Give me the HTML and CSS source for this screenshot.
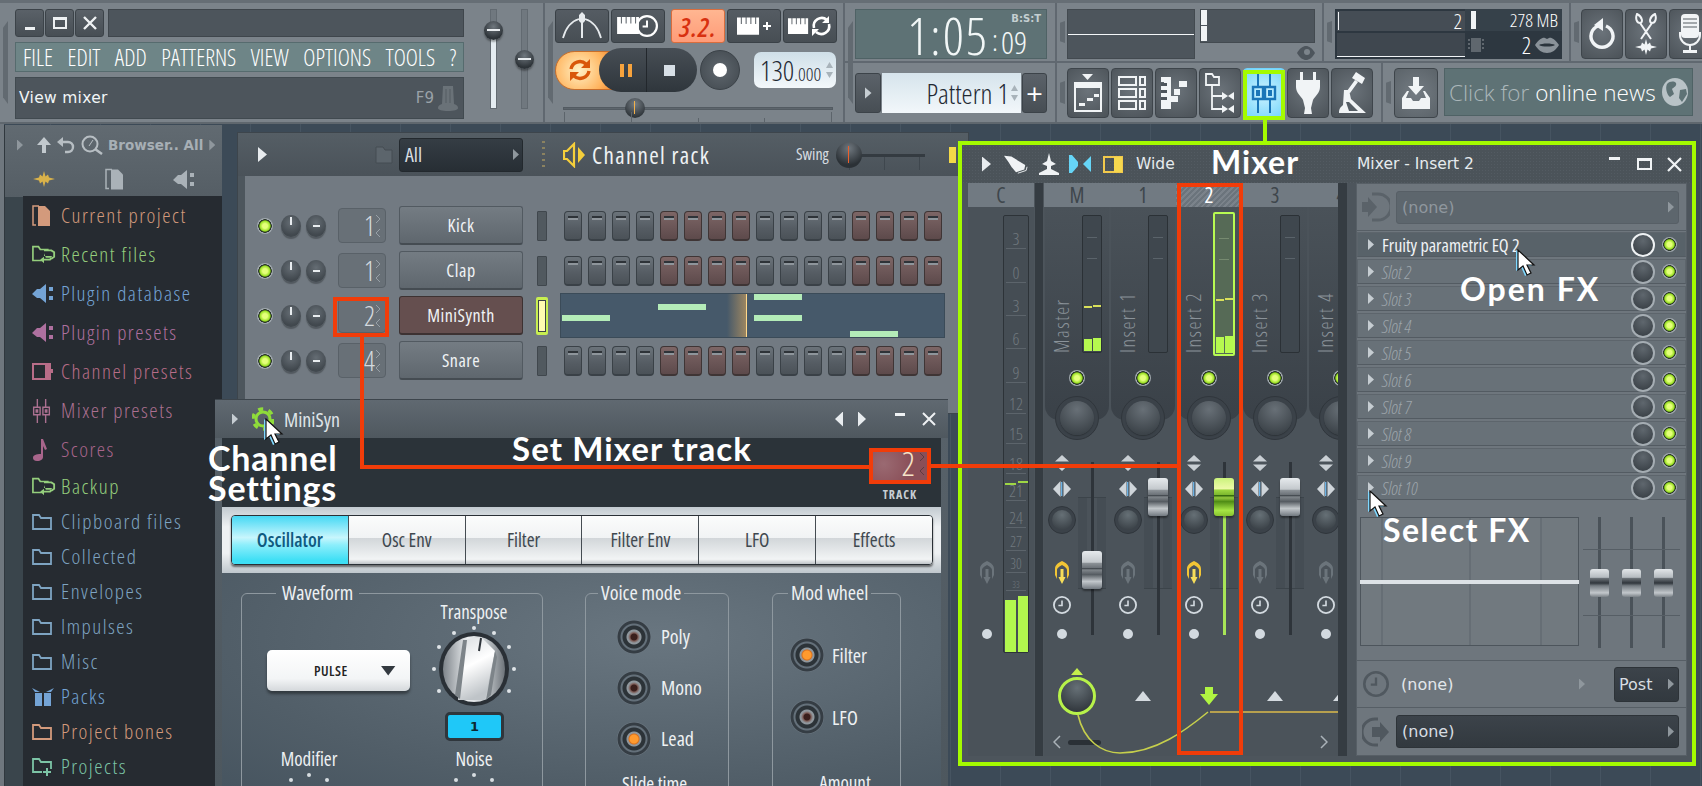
FILE: index.html
```
<!DOCTYPE html>
<html lang="en">
<head>
<meta charset="utf-8">
<title>FL Studio mixer</title>
<link rel="stylesheet" href="styles.css">
</head>
<body>
<svg class="defs" width="0" height="0" aria-hidden="true">
<defs>
<symbol id="keys" viewBox="0 0 24 20"><path fill="currentColor" d="M0 1h4v7h1V1h4v7h1V1h4v7h1V1h4v7h1V1h3v18H0z"/></symbol>
<symbol id="clock" viewBox="0 0 20 20"><circle cx="10" cy="10" r="9" fill="none" stroke="currentColor" stroke-width="2"/><path d="M10 5v5.500H6" fill="none" stroke="currentColor" stroke-width="1.800"/></symbol>
<symbol id="send" viewBox="0 0 16 24"><path fill="currentColor" d="M8 0c4 2 7 4 7 8v6l-2 4V9c0-2-3-4-5-5-2 1-5 3-5 5v9l-2-4V8c0-4 3-6 7-8z"/><path fill="var(--acc,currentColor)" d="M6.500 8h3v8h2L8 23l-3.500-7h2z"/></symbol>
<symbol id="pan" viewBox="0 0 18 18"><path fill="#cfd5da" d="M7.500 1v16L0 9z"/><path fill="#cfd5da" d="M10.500 1v16L18 9z"/><path fill="#6cb2e4" d="M8 2h1.300v14H8z"/></symbol>
<symbol id="updown" viewBox="0 0 16 16"><path fill="#c9cfd4" d="M8 0l7 6.500H1zM8 16l-7-6.500h14z"/></symbol>
<symbol id="cursor" viewBox="0 0 20 28"><path fill="#7fd8ff" d="M0 1v21l5-4 4 9 4-2-4-8h7z"/><path fill="#fff" stroke="#111" stroke-width="1.200" d="M2 1v20l5-4 4 9 4-2-4-8h7z"/></symbol>
<symbol id="folder" viewBox="0 0 20 16"><path fill="none" stroke="currentColor" stroke-width="1.800" d="M1 1h6l2 3h10v11H1z"/></symbol>
<symbol id="folderback" viewBox="0 0 26 20"><path fill="none" stroke="currentColor" stroke-width="1.800" d="M12 16H1V1h6l2 3h9"/><path fill="none" stroke="currentColor" stroke-width="2" d="M13 5h8l3 2v5l-3 2"/><path fill="currentColor" d="M13 8v3h9l-4 4 3-1h-8v-2l-4 3 4 4v-3h7l3-3h-8z"/></symbol>
<symbol id="doc" viewBox="0 0 19 21"><path fill="currentColor" d="M6 1h7l5 5v15H6z"/><path fill="none" stroke="currentColor" stroke-width="1.500" d="M4 20H1V1h6"/></symbol>
<symbol id="plug" viewBox="0 0 22 19"><path fill="currentColor" d="M14 0v19L8 14H5l-5-4 5-5h3z"/><path fill="currentColor" d="M17 3h4v4h-4zM17 12h4v4h-4z"/></symbol>
<symbol id="channel" viewBox="0 0 22 19"><path fill="none" stroke="currentColor" stroke-width="2" d="M1 2h13v15H1z"/><path fill="currentColor" d="M15 1h4v6h2v4h-2v7h-4z"/></symbol>
<symbol id="mixp" viewBox="0 0 19 26"><path fill="none" stroke="currentColor" stroke-width="1.500" d="M5 0v9M5 17v9M14 0v9M14 17v9M1 9h7v8H1zM11 9h7v8h-7z"/><path fill="currentColor" d="M3 11h3v4H3zM13 11h3v4h-3z"/></symbol>
<symbol id="note" viewBox="0 0 16 22"><path fill="currentColor" d="M9 0h2l4 10-2 1-2-4v11c0 2-2 4-6 4-3 0-4-2-4-3 0-3 3-4 8-4V2z"/></symbol>
<symbol id="box" viewBox="0 0 22 18"><path fill="currentColor" d="M3 5h7v13H3zM12 5h7v13h-7zM0 0l8 4H3zM22 0l-8 4h5z"/></symbol>
<symbol id="folderplus" viewBox="0 0 20 18"><path fill="none" stroke="currentColor" stroke-width="1.800" d="M10 14H1V1h6l2 3h10v7"/><path fill="currentColor" d="M14 10h2v3h3v2h-3v3h-2v-3h-3v-2h3z"/></symbol>
<symbol id="wave" viewBox="0 0 22 16"><path fill="currentColor" d="M11 0l1.500 5.500 2.500-2 1 3 6 1.500-6 1.500-1 3-2.500-2L11 16l-1.500-5.500-2.500 2-1-3L0 8l6-1.500 1-3 2.500 2z"/></symbol>
<symbol id="tri-up" viewBox="0 0 16 10"><path fill="currentColor" d="M8 0l8 10H0z"/></symbol>
<symbol id="chev" viewBox="0 0 6 24"><path fill="none" stroke="currentColor" d="M1 1l4 4-4 4M5 15l-4 4 4 4"/></symbol>
</defs>
</svg>

<div class="app">
  <header class="toolbar">
    <section class="panel p-main">
      <div class="main-left">
        <div class="win-row">
          <button class="wbtn"><svg width="14" height="14" viewBox="0 0 14 14"><path fill="#eef1f3" d="M2 11h10v3H2z"/></svg></button>
          <button class="wbtn"><svg width="16" height="14" viewBox="0 0 16 14"><path fill="none" stroke="#eef1f3" stroke-width="2" d="M2 2h12v10H2z"/><path fill="#eef1f3" d="M2 2h12v2H2z"/></svg></button>
          <button class="wbtn"><svg width="16" height="16" viewBox="0 0 16 16"><path stroke="#eef1f3" stroke-width="2.400" d="M2 2l12 12M14 2L2 14"/></svg></button>
          <div class="title-box"></div>
        </div>
        <nav class="menu"><span>FILE</span><span>EDIT</span><span>ADD</span><span>PATTERNS</span><span>VIEW</span><span>OPTIONS</span><span>TOOLS</span><span>?</span></nav>
        <div class="hint"><span class="hint-t">View mixer</span><span class="hint-k">F9</span>
          <svg width="20" height="26" viewBox="0 0 20 26"><path fill="#6a7278" d="M5 1h10l1 18c3 1 4 2 4 4s-4 3-10 3-10-1-10-3 1-3 4-4z"/><path stroke="#555c62" d="M8 4v14M12 4v14"/></svg></div>
      </div>
      <div class="masters">
        <div class="mslider"><div class="mfill"></div><div class="mknob k1"></div></div>
        <div class="mslider"><div class="mknob k2"></div></div>
      </div>
    </section>

    <section class="panel p-trans">
      <div class="tr-row">
        <button class="tb tb-w"><svg width="42" height="28" viewBox="0 0 42 28"><path fill="none" stroke="#e6eaed" stroke-width="1.800" d="M2 26C5 15 11 9 18 7M40 26C37 15 31 9 24 7"/><path fill="#e6eaed" d="M18 3l3-3 3 3v6l-2 2v15h-2V11l-2-2z"/></svg></button>
        <button class="tb tb-w"><svg width="42" height="24" viewBox="0 0 42 24"><use href="#keys" x="0" y="2" width="23" height="19" color="#fff"/><use href="#clock" x="19" y="1" width="22" height="22" color="#fff"/></svg></button>
        <button class="tb tb-w tb-led">3.2.</button>
        <button class="tb tb-w"><svg width="34" height="20" viewBox="0 0 34 20"><use href="#keys" width="23" height="20" color="#fff"/><path fill="#fff" d="M26 9h3V6h2v3h3v2h-3v3h-2v-3h-3z"/></svg></button>
        <button class="tb tb-w"><svg width="44" height="24" viewBox="0 0 44 24"><use href="#keys" y="3" width="21" height="18" color="#fff"/><path fill="none" stroke="#fff" stroke-width="2.600" d="M26 14a8 8 0 0 1 13-8M41 10a8 8 0 0 1-13 8"/><path fill="#fff" d="M41 2v7h-7zM24 22v-7h7z"/></svg></button>
      </div>
      <div class="play-row">
        <div class="loop"><svg width="24" height="24" viewBox="0 0 24 24"><path fill="none" stroke="#d9570a" stroke-width="3.400" d="M3 11a9 9 0 0 1 15-5M21 13a9 9 0 0 1-15 5"/><path fill="#d9570a" d="M22 1v9h-9zM2 23v-9h9z"/></svg></div>
        <div class="pill">
          <div class="pill-l"><span class="pause"></span></div>
          <div class="pill-r"><span class="stop"></span></div>
        </div>
        <div class="record"><span></span></div>
        <div class="tempo"><span class="tempo-a">130</span><span class="tempo-b">.000</span><span class="spin"><i></i><b></b></span></div>
      </div>
      <div class="pitch"><div class="pitch-line"></div><div class="pitch-knob"></div>
        <div class="pitch-ticks"><i></i><i></i><i></i><i></i><i></i></div></div>
    </section>

    <section class="panel p-time">
      <div class="time-cell"><div class="time"><span class="t-big">1:05</span><span class="t-col">:</span><span class="t-sm">09</span><span class="t-lbl">B:S:T</span></div></div>
      <div class="pat-cell">
        <button class="pbtn"><i class="tri"></i></button>
        <div class="pat"><span>Pattern 1</span><span class="spin"><i></i><b></b></span></div>
        <button class="pbtn pbtn-plus">+</button>
      </div>
    </section>

    <div class="tool-right">
      <div class="rtop">
        <section class="panel p-scope">
          <div class="scope"></div>
          <div class="scope2-w">
            <div class="scope2"><i></i><i></i></div>
            <svg class="eye" width="18" height="14" viewBox="0 0 18 14"><path fill="#4d555c" d="M0 7c3-5 6-7 9-7s6 2 9 7c-3 5-6 7-9 7s-6-2-9-7z"/><circle cx="10" cy="6" r="3" fill="#7c848b"/></svg>
          </div>
        </section>
        <section class="panel p-cpu">
          <div class="cpu">
            <div class="cpu-l"><div class="cpu-lt"><i></i><span>2</span></div><div class="cpu-lb"></div></div>
            <div class="cpu-r">
              <div class="cpu-rt"><i></i><span>278 MB</span></div>
              <div class="cpu-rb"><svg width="16" height="14" viewBox="0 0 16 14"><path fill="#5f676e" d="M3 0h10v14H3zM0 1h2v2H0zM0 5h2v2H0zM0 9h2v2H0zM14 1h2v2h-2zM14 5h2v2h-2zM14 9h2v2h-2z"/></svg><span>2</span><svg width="24" height="16" viewBox="0 0 24 16"><path fill="#8a9299" d="M0 8c4-6 8-8 10-7l2 1 2-1c2-1 6 1 10 7-3 5-7 8-12 8S3 13 0 8z"/><path fill="#2b343c" d="M4 8c3-2 13-2 16 0-3 2-13 2-16 0z"/></svg></div>
            </div>
          </div>
        </section>
        <section class="panel p-act">
          <button class="bb"><svg width="28" height="32" viewBox="0 0 28 32"><path fill="none" stroke="#f1f4f6" stroke-width="3.400" d="M10 8a11 11 0 1 0 8 0"/><path fill="#f1f4f6" d="M15 0v13L6 7z"/></svg></button>
          <button class="bb"><svg width="26" height="42" viewBox="0 0 26 42"><path fill="none" stroke="#f1f4f6" stroke-width="2" d="M4 1c-2 5 0 9 3 9s3-6-3-9zM22 1c2 5 0 9-3 9s-3-6 3-9zM7 10l11 16M19 10L8 26"/><use href="#wave" y="26" width="26" height="16" color="#f1f4f6"/></svg></button>
          <button class="bb"><svg width="22" height="40" viewBox="0 0 22 40"><path fill="#f1f4f6" d="M6 0h10a4 4 0 0 1 4 4v16a4 4 0 0 1-4 4H6a4 4 0 0 1-4-4V4a4 4 0 0 1 4-4z"/><path stroke="#555c62" d="M4 5h14M4 9h14M4 13h14"/><path fill="none" stroke="#f1f4f6" stroke-width="2" d="M1 18v3a9 9 0 0 0 20 0v-3"/><path fill="#f1f4f6" d="M10 30h2v6h6v3H4v-3h6z"/></svg></button>
        </section>
      </div>
      <div class="rbot">
        <section class="panel p-tools">
          <button class="bb"><svg width="30" height="40" viewBox="0 0 30 40"><path fill="#f1f4f6" d="M9 1h11l-5.500 6z"/><path fill="none" stroke="#f1f4f6" stroke-width="2" d="M2 10h26v28H2z"/><path fill="#f1f4f6" d="M2 10h26v5H2zM6 30h6v3H6zM14 25h6v3h-6zM21 21h5v3h-5z"/></svg></button>
          <button class="bb"><svg width="28" height="34" viewBox="0 0 28 34"><path fill="none" stroke="#f1f4f6" stroke-width="2" d="M1 1h17v8H1zM1 13h17v8H1zM1 25h17v8H1zM22 1h5v8h-5zM22 13h5v8h-5zM22 25h5v8h-5z"/></svg></button>
          <button class="bb"><svg width="30" height="34" viewBox="0 0 30 34"><path fill="#f1f4f6" d="M0 1h10v32H0zM3 6H0v2h3zM18 5h8v6h-8zM13 13h6v6h-6zM10 20h7v6h-7z"/><path fill="#4d555c" d="M0 7h6v3H0zM0 14h6v3H0zM0 21h6v3H0z"/></svg></button>
          <button class="bb"><svg width="30" height="40" viewBox="0 0 30 40"><path fill="none" stroke="#f1f4f6" stroke-width="1.800" d="M1 1h6l2 3h5v8H1zM7 12v24h10M7 23h10"/><path fill="#f1f4f6" d="M17 19l6 4 6-4v8l-6-4-6 4zM17 32l6 4 6-4v8l-6-4-6 4z"/></svg></button>
          <button class="bb bb-on"><svg width="28" height="40" viewBox="0 0 28 40"><path stroke="#1a76b8" stroke-width="2" d="M8 0v14M8 26v14M20 0v14M20 26v14"/><path fill="none" stroke="#1a76b8" stroke-width="2.400" d="M3 14h10v12H3zM15 14h10v12H15z"/><path fill="#1a76b8" d="M6 17h4v6H6zM18 17h4v6h-4z"/></svg></button>
          <button class="bb"><svg width="26" height="42" viewBox="0 0 26 42"><path fill="#f1f4f6" d="M5 0h3v8h10V0h3v8h4v7c0 6-5 9-7 13l-2 8 1 6H9l1-6-2-8C6 24 1 21 1 15V8h4z"/></svg></button>
          <button class="bb"><svg width="30" height="42" viewBox="0 0 30 42"><path fill="#f1f4f6" d="M19 0l9 6-3 6-10-6zM18 8l3 2-8 11-3-2zM7 18h5l2 9 15 14H2c0-5 2-6 4-8z"/><path fill="#565e65" d="M9 30h3l9 9h-9z"/></svg></button>
        </section>
        <section class="panel p-news">
          <button class="bb bb-dl"><svg width="28" height="32" viewBox="0 0 28 32"><path fill="#f1f4f6" d="M11 0h6v9h5l-8 9-8-9h5z"/><path fill="#f1f4f6" d="M0 21l5-7h2l-3 7h5l2 3h6l2-3h5l-3-7h2l5 7v11H0z"/></svg></button>
          <div class="news"><span><em>Click for</em> online news</span>
            <svg width="26" height="28" viewBox="0 0 26 28"><ellipse cx="13" cy="14" rx="13" ry="14" fill="#b9c3c7"/><path fill="#5e7275" d="M5 6c3-3 7-3 9-1 1 3-2 4-4 6l2 5-4 3c-3-2-5-9-3-13zM18 12l6-1 1 5-5 8-3-4z"/></svg></div>
        </section>
      </div>
    </div>
  </header>

  <aside class="browser">
    <div class="br-head">
      <div class="br-r1">
        <i class="tri tri-d"></i>
        <svg width="14" height="16" viewBox="0 0 14 16"><path fill="#c2c9ce" d="M7 0l7 8H9v8H5V8H0z"/></svg>
        <svg width="18" height="17" viewBox="0 0 18 17"><path fill="none" stroke="#b7bec3" stroke-width="2.400" d="M4 5h7a5 5 0 0 1 0 10H8"/><path fill="#b7bec3" d="M6 0v10L0 5z"/></svg>
        <svg width="22" height="20" viewBox="0 0 22 20"><circle cx="9" cy="9" r="7.500" fill="none" stroke="#b7bec3" stroke-width="2"/><path stroke="#b7bec3" stroke-width="2.500" d="M14 14l7 5"/><path stroke="#b7bec3" d="M8 11l4-6"/></svg>
        <span class="br-title">Browser.. All</span>
        <i class="tri tri-d"></i>
      </div>
      <div class="br-r2">
        <svg width="24" height="16" class="c-gold"><use href="#wave"/></svg>
        <svg width="19" height="22" class="c-grey"><use href="#doc"/></svg>
        <svg width="22" height="19" class="c-grey"><use href="#plug"/></svg>
      </div>
    </div>
    <div class="br-body">
      <div class="br-side"></div>
      <ul class="br-list">
        <li class="tall c-proj"><svg width="19" height="21"><use href="#doc"/></svg><span>Current project</span></li>
        <li class="tall c-green"><svg width="24" height="20"><use href="#folderback"/></svg><span>Recent files</span></li>
        <li class="tall c-blue"><svg width="22" height="19"><use href="#plug"/></svg><span>Plugin database</span></li>
        <li class="tall c-purple"><svg width="22" height="19"><use href="#plug"/></svg><span>Plugin presets</span></li>
        <li class="tall c-rose"><svg width="22" height="19"><use href="#channel"/></svg><span>Channel presets</span></li>
        <li class="tall c-rose2"><svg width="19" height="24"><use href="#mixp"/></svg><span>Mixer presets</span></li>
        <li class="tall c-rose3"><svg width="16" height="22"><use href="#note"/></svg><span>Scores</span></li>
        <li class="c-green"><svg width="24" height="20"><use href="#folderback"/></svg><span>Backup</span></li>
        <li class="c-fold"><svg width="20" height="16"><use href="#folder"/></svg><span>Clipboard files</span></li>
        <li class="c-fold"><svg width="20" height="16"><use href="#folder"/></svg><span>Collected</span></li>
        <li class="c-fold"><svg width="20" height="16"><use href="#folder"/></svg><span>Envelopes</span></li>
        <li class="c-fold"><svg width="20" height="16"><use href="#folder"/></svg><span>Impulses</span></li>
        <li class="c-fold"><svg width="20" height="16"><use href="#folder"/></svg><span>Misc</span></li>
        <li class="c-blue"><svg width="22" height="18"><use href="#box"/></svg><span>Packs</span></li>
        <li class="c-proj"><svg width="20" height="16"><use href="#folder"/></svg><span>Project bones</span></li>
        <li class="c-teal"><svg width="20" height="18"><use href="#folderplus"/></svg><span>Projects</span></li>
      </ul>
    </div>
  </aside>

  <section class="rack">
    <div class="rack-head">
      <i class="tri tri-w"></i>
      <svg class="rack-folder" width="18" height="18" viewBox="0 0 18 18"><path fill="#5c656c" stroke="#454c52" d="M1 1h7l2 3h7v13H1z"/></svg>
      <div class="sel-all"><span>All</span><i class="tri tri-d"></i></div>
      <div class="vdots"></div>
      <svg class="rack-spk" width="22" height="26" viewBox="0 0 22 26"><path fill="none" stroke="#f5cf3b" stroke-width="2.200" d="M11 2v22l-7-7H1V9h3z"/><path fill="#f5cf3b" d="M15 5l7 8-7 8z"/></svg>
      <h2 class="rack-title">Channel rack</h2>
      <span class="swing">Swing</span>
      <div class="swing-ctl"><div class="swing-line"></div><div class="swing-knob"></div></div>
      <div class="rack-y"></div>
    </div>
    <div class="rack-body">
      <div class="ch">
        <span class="led"></span><span class="knob"></span><span class="knob k-m"></span><div class="num"><span>1</span><svg class="chev" width="6" height="24"><use href="#chev"/></svg></div><button class="cname">Kick</button><span class="csel"></span>
        <div class="steps"><i></i><i></i><i></i><i></i><i class="r"></i><i class="r"></i><i class="r"></i><i class="r"></i><i></i><i></i><i></i><i></i><i class="r"></i><i class="r"></i><i class="r"></i><i class="r"></i></div>
      </div>
      <div class="ch">
        <span class="led"></span><span class="knob"></span><span class="knob k-m"></span><div class="num"><span>1</span><svg class="chev" width="6" height="24"><use href="#chev"/></svg></div><button class="cname">Clap</button><span class="csel"></span>
        <div class="steps"><i></i><i></i><i></i><i></i><i class="r"></i><i class="r"></i><i class="r"></i><i class="r"></i><i></i><i></i><i></i><i></i><i class="r"></i><i class="r"></i><i class="r"></i><i class="r"></i></div>
      </div>
      <div class="ch">
        <span class="led"></span><span class="knob"></span><span class="knob k-m"></span><div class="num"><span>2</span><svg class="chev" width="6" height="24"><use href="#chev"/></svg></div><button class="cname cname-on">MiniSynth</button><span class="csel csel-on"><i></i></span>
        <div class="roll">
          <i class="nt n1"></i><i class="nt n2"></i><i class="nt n3"></i><i class="nt n4"></i><i class="nt n5"></i><i class="play"></i>
        </div>
      </div>
      <div class="ch">
        <span class="led"></span><span class="knob"></span><span class="knob k-m"></span><div class="num"><span>4</span><svg class="chev" width="6" height="24"><use href="#chev"/></svg></div><button class="cname">Snare</button><span class="csel"></span>
        <div class="steps"><i></i><i></i><i></i><i></i><i class="r"></i><i class="r"></i><i class="r"></i><i class="r"></i><i></i><i></i><i></i><i></i><i class="r"></i><i class="r"></i><i class="r"></i><i class="r"></i></div>
      </div>
    </div>
  </section>

  <section class="synth">
    <div class="syn-title">
      <i class="tri tri-s"></i>
      <svg class="gear" width="22" height="24" viewBox="0 0 22 24"><circle cx="11" cy="12" r="7" fill="none" stroke="#8fdc3a" stroke-width="3"/><circle cx="11" cy="12" r="10" fill="none" stroke="#8fdc3a" stroke-width="3.500" stroke-dasharray="5 5.500"/></svg>
      <span class="syn-name">MiniSyn</span>
      <span class="syn-nav"><i class="tri tri-l"></i><i class="tri tri-w2"></i></span>
      <svg width="12" height="12" viewBox="0 0 12 12"><path fill="#eef1f3" d="M1 0h10v3H1z"/></svg>
      <svg class="syn-x" width="14" height="14" viewBox="0 0 14 14"><path stroke="#eef1f3" stroke-width="2" d="M1 1l12 12M13 1L1 13"/></svg>
    </div>
    <div class="syn-top">
      <div class="trk"><div class="trk-box"><span>2</span><svg class="chev chev-t" width="6" height="24"><use href="#chev"/></svg></div><span class="trk-l">TRACK</span></div>
    </div>
    <div class="syn-tabs">
      <div class="tabs"><button class="tab tab-on">Oscillator</button><button class="tab">Osc Env</button><button class="tab">Filter</button><button class="tab">Filter Env</button><button class="tab">LFO</button><button class="tab">Effects</button></div>
    </div>
    <div class="syn-body">
      <fieldset class="fs fs-wave">
        <legend>Waveform</legend>
        <div class="wave-grid">
          <div class="wg-l">
            <div class="pulse"><span>PULSE</span><i></i></div>
            <div class="lab lab-mod">Modifier</div>
            <svg class="mini-k" width="84" height="84" viewBox="0 0 84 84"><g fill="#d7dde1"><circle cx="42" cy="2" r="2"/><circle cx="24" cy="7" r="2"/><circle cx="60" cy="7" r="2"/></g><circle cx="42" cy="38" r="24" fill="#32383e"/><circle cx="42" cy="38" r="20" fill="#c9cfd3"/></svg>
          </div>
          <div class="wg-r">
            <div class="lab">Transpose</div>
            <svg class="trans-k" width="84" height="84" viewBox="0 0 84 84">
              <defs>
                <linearGradient id="met" x1="0" x2="1" y1="0" y2="0"><stop offset="0" stop-color="#7e848a"/><stop offset=".4" stop-color="#eceff1"/><stop offset=".7" stop-color="#c5cacd"/><stop offset="1" stop-color="#6d7379"/></linearGradient>
                <linearGradient id="met2" x1="0" x2=".3" y1="0" y2="1"><stop offset="0" stop-color="#d8dcdf"/><stop offset=".5" stop-color="#fff"/><stop offset="1" stop-color="#bfc4c8"/></linearGradient>
              </defs>
              <g fill="#dfe4e8"><circle cx="42" cy="2" r="2"/><circle cx="22" cy="7" r="2"/><circle cx="62" cy="7" r="2"/><circle cx="7" cy="21" r="2"/><circle cx="77" cy="21" r="2"/><circle cx="2" cy="43" r="2"/><circle cx="82" cy="43" r="2"/><circle cx="7" cy="65" r="2"/><circle cx="77" cy="65" r="2"/></g>
              <ellipse cx="42" cy="43" rx="35" ry="37" fill="#2a3036"/><ellipse cx="42" cy="43" rx="31" ry="33" fill="url(#met)"/>
              <path fill="url(#met2)" d="M31 14l18-3 14 14-10 49H26z"/><path fill="#7d8489" d="M31 14l-8 55 5 4 7-59zM63 25l-9 49 5-5 6-38z"/><path stroke="#2f353b" stroke-width="2" d="M49 12l-2 13"/>
            </svg>
            <div class="disp"><span>1</span></div>
            <div class="lab lab-noise">Noise</div>
            <svg class="mini-k" width="84" height="84" viewBox="0 0 84 84"><g fill="#d7dde1"><circle cx="42" cy="2" r="2"/><circle cx="24" cy="7" r="2"/><circle cx="60" cy="7" r="2"/></g><circle cx="42" cy="38" r="24" fill="#32383e"/><circle cx="42" cy="38" r="20" fill="#c9cfd3"/></svg>
          </div>
        </div>
      </fieldset>
      <fieldset class="fs fs-voice">
        <legend>Voice mode</legend>
        <div class="rad"><span class="radio"></span><span>Poly</span></div>
        <div class="rad"><span class="radio"></span><span>Mono</span></div>
        <div class="rad"><span class="radio radio-on"></span><span>Lead</span></div>
        <div class="lab lab-slide">Slide time</div>
      </fieldset>
      <fieldset class="fs fs-mod">
        <legend>Mod wheel</legend>
        <div class="rad"><span class="radio radio-on"></span><span>Filter</span></div>
        <div class="rad"><span class="radio"></span><span>LFO</span></div>
        <div class="lab lab-amount">Amount</div>
      </fieldset>
    </div>
  </section>

  <section class="mixer">
    <div class="mx-head">
      <i class="tri tri-w"></i>
      <svg class="mx-i1" width="24" height="20" viewBox="0 0 26 20"><path fill="#f0f3f5" d="M0 1l8 1 10 6 5 3-1 5-9 3-5-6-3-5z"/><path fill="none" stroke="#f0f3f5" d="M15 20l9-3 1-4"/></svg>
      <svg class="mx-i2" width="20" height="22" viewBox="0 0 20 22"><path fill="#f0f3f5" d="M10 0l2 8 5 3-5 2v3l8 4v2H0v-2l8-4v-3l-5-2 5-3z"/></svg>
      <svg class="mx-i3" width="22" height="18" viewBox="0 0 22 18"><path fill="#66d5f7" d="M0 0h3l6 7v4l-6 7H0zM22 1v16l-8-8z"/></svg>
      <svg class="mx-i4" width="20" height="17" viewBox="0 0 20 17"><path fill="none" stroke="#f2c94c" stroke-width="2" d="M1 1h18v15H1z"/><path fill="#f6d84e" d="M11 1h8v15h-8z"/></svg>
      <span class="mx-wide">Wide</span>
      <span class="mx-name">Mixer - Insert 2</span>
      <svg class="mx-min" width="12" height="8" viewBox="0 0 12 8"><path fill="#f0f3f5" d="M0 0h11v3H0z"/></svg>
      <svg class="mx-max" width="15" height="12" viewBox="0 0 15 12"><path fill="none" stroke="#f0f3f5" stroke-width="2" d="M1 1h13v10H1z"/><path fill="#f0f3f5" d="M1 1h13v2H1z"/></svg>
      <svg class="mx-x" width="15" height="15" viewBox="0 0 15 15"><path stroke="#f0f3f5" stroke-width="2.200" d="M1 1l13 13M14 1L1 14"/></svg>
    </div>
    <div class="mx-body">
      <div class="cstrip">
        <div class="tk-head">C</div>
        <div class="c-main">
          <div class="c-side">
            <svg class="tk-send-i" width="16" height="24"><use href="#send" color="#6b747b"/></svg>
            <span class="dot"></span>
          </div>
          <div class="bigmeter">
            <div class="bm bm33" >3</div><div class="bm bm34">0</div><div class="bm bm33">3</div><div class="bm bm33">6</div><div class="bm bm34">9</div><div class="bm bm31">12</div><div class="bm bm30">15</div><div class="bm bm30">18</div><div class="bm bm27">21</div><div class="bm bm27">24</div><div class="bm bm23">27</div><div class="bm bm22">30</div><div class="bm bm18">33</div>
            <i class="mark bm-m1"></i><i class="mark bm-m2"></i>
            <div class="bm-bars"><i class="bm-a"></i><i class="bm-b"></i></div>
          </div>
        </div>
      </div>
      <div class="mx-bar"></div>
      <div class="tracks">
        <div class="tracks-row">
          <div class="track">
            <div class="tk-head">M</div>
            <div class="tk-strip">
              <div class="tk-up"><span class="tk-lab">Master</span><div class="meter"><i class="mark m-a"></i><i class="mark m-b"></i><i class="bar b-a"></i><i class="bar b-b"></i></div></div>
              <span class="led tk-led"></span><span class="bigk"></span>
            </div>
            <div class="tk-low">
              <div class="tk-ctl">
                <svg width="16" height="16"><use href="#updown"/></svg><svg class="g-pan" width="18" height="18"><use href="#pan"/></svg><span class="smk"></span>
                <svg class="g-send on" width="16" height="24"><use href="#send"/></svg><svg class="g-clock" width="18" height="18"><use href="#clock"/></svg><span class="dot"></span>
              </div>
              <div class="tk-fad"><span class="fline"></span><span class="fh f-lo"></span></div>
            </div>
            <div class="tk-bot"><span class="bot-up"></span><span class="send-k"></span></div>
          </div>
          <div class="track">
            <div class="tk-head">1</div>
            <div class="tk-strip">
              <div class="tk-up"><span class="tk-lab">Insert 1</span><div class="meter"></div></div>
              <span class="led tk-led"></span><span class="bigk"></span>
            </div>
            <div class="tk-low">
              <div class="tk-ctl">
                <svg width="16" height="16"><use href="#updown"/></svg><svg class="g-pan" width="18" height="18"><use href="#pan"/></svg><span class="smk"></span>
                <svg class="g-send" width="16" height="24"><use href="#send"/></svg><svg class="g-clock" width="18" height="18"><use href="#clock"/></svg><span class="dot"></span>
              </div>
              <div class="tk-fad"><span class="fline"></span><span class="fh"></span></div>
            </div>
            <div class="tk-bot"><svg class="w-up" width="16" height="10"><use href="#tri-up"/></svg></div>
          </div>
          <div class="track">
            <div class="tk-head tk-head-on">2</div>
            <div class="tk-strip">
              <div class="tk-up"><span class="tk-lab">Insert 2</span><div class="meter meter-on"><i class="mark m-c"></i><i class="mark m-d"></i><i class="bar b-c"></i><i class="bar b-d"></i></div></div>
              <span class="led tk-led"></span><span class="bigk"></span>
            </div>
            <div class="tk-low">
              <div class="tk-ctl">
                <svg width="16" height="16"><use href="#updown"/></svg><svg class="g-pan" width="18" height="18"><use href="#pan"/></svg><span class="smk"></span>
                <svg class="g-send on" width="16" height="24"><use href="#send"/></svg><svg class="g-clock" width="18" height="18"><use href="#clock"/></svg><span class="dot"></span>
              </div>
              <div class="tk-fad"><span class="fline fline-on"></span><span class="fh fh-on"></span></div>
            </div>
            <div class="tk-bot"><svg width="18" height="18" viewBox="0 0 18 18"><path fill="#b0f542" d="M5 0h8v7h5l-9 11L0 7h5z"/></svg></div>
          </div>
          <div class="track">
            <div class="tk-head">3</div>
            <div class="tk-strip">
              <div class="tk-up"><span class="tk-lab">Insert 3</span><div class="meter"></div></div>
              <span class="led tk-led"></span><span class="bigk"></span>
            </div>
            <div class="tk-low">
              <div class="tk-ctl">
                <svg width="16" height="16"><use href="#updown"/></svg><svg class="g-pan" width="18" height="18"><use href="#pan"/></svg><span class="smk"></span>
                <svg class="g-send" width="16" height="24"><use href="#send"/></svg><svg class="g-clock" width="18" height="18"><use href="#clock"/></svg><span class="dot"></span>
              </div>
              <div class="tk-fad"><span class="fline"></span><span class="fh"></span></div>
            </div>
            <div class="tk-bot"><svg class="w-up" width="16" height="10"><use href="#tri-up"/></svg></div>
          </div>
          <div class="track">
            <div class="tk-head">4</div>
            <div class="tk-strip">
              <div class="tk-up"><span class="tk-lab">Insert 4</span><div class="meter"></div></div>
              <span class="led tk-led"></span><span class="bigk"></span>
            </div>
            <div class="tk-low">
              <div class="tk-ctl">
                <svg width="16" height="16"><use href="#updown"/></svg><svg class="g-pan" width="18" height="18"><use href="#pan"/></svg><span class="smk"></span>
                <svg class="g-send" width="16" height="24"><use href="#send"/></svg><svg class="g-clock" width="18" height="18"><use href="#clock"/></svg><span class="dot"></span>
              </div>
            </div>
            <div class="tk-bot"><svg class="w-up" width="16" height="10"><use href="#tri-up"/></svg></div>
          </div>
        </div>
        <div class="tk-scroll"><svg width="8" height="14" viewBox="0 0 8 14"><path fill="none" stroke="#aab2b8" stroke-width="1.500" d="M7 1L1 7l6 6"/></svg><span class="thumb"></span><svg class="sc-r" width="8" height="14" viewBox="0 0 8 14"><path fill="none" stroke="#aab2b8" stroke-width="1.500" d="M1 1l6 6-6 6"/></svg></div>
        <svg class="curve" width="294" height="574" viewBox="0 0 294 574"><path fill="none" stroke="#c6cf4c" stroke-width="1.600" d="M34 532C40 558 58 570 76 570C112 570 142 547 164 529"/><path fill="none" stroke="#b7a04e" stroke-width="2" d="M166 529H294"/></svg>
      </div>
      <div class="mx-bar mx-bar2"></div>
      <div class="fxp">
        <div class="fx-top">
          <svg width="28" height="30" viewBox="0 0 28 30"><path fill="#5a6269" d="M0 10h6V5l9 10-9 10v-5H0z"/><path fill="none" stroke="#5a6269" stroke-width="3" d="M10 2h6a13 13 0 0 1 0 26h-6"/></svg>
          <div class="fx-sel fx-sel-dim"><span>(none)</span><i class="tri tri-d"></i></div>
        </div>
        <div class="slots">
          <div class="slot slot-on"><i class="tri tri-s"></i><span class="s-on">Fruity parametric EQ 2</span><span class="sk sk-on"></span><span class="led sl"></span></div>
          <div class="slot"><i class="tri tri-s"></i><span>Slot 2</span><span class="sk"></span><span class="led sl"></span></div>
          <div class="slot"><i class="tri tri-s"></i><span>Slot 3</span><span class="sk"></span><span class="led sl"></span></div>
          <div class="slot"><i class="tri tri-s"></i><span>Slot 4</span><span class="sk"></span><span class="led sl"></span></div>
          <div class="slot"><i class="tri tri-s"></i><span>Slot 5</span><span class="sk"></span><span class="led sl"></span></div>
          <div class="slot"><i class="tri tri-s"></i><span>Slot 6</span><span class="sk"></span><span class="led sl"></span></div>
          <div class="slot"><i class="tri tri-s"></i><span>Slot 7</span><span class="sk"></span><span class="led sl"></span></div>
          <div class="slot"><i class="tri tri-s"></i><span>Slot 8</span><span class="sk"></span><span class="led sl"></span></div>
          <div class="slot"><i class="tri tri-s"></i><span>Slot 9</span><span class="sk"></span><span class="led sl"></span></div>
          <div class="slot"><i class="tri tri-s"></i><span>Slot 10</span><span class="sk"></span><span class="led sl"></span></div>
        </div>
        <div class="eq-row">
          <div class="eq"><i></i></div>
          <div class="eqf"><span class="eqh"></span></div>
          <div class="eqf"><span class="eqh"></span></div>
          <div class="eqf"><span class="eqh"></span></div>
        </div>
        <div class="fx-row">
          <svg class="fx-clock" width="26" height="26"><use href="#clock" color="#50585f"/></svg>
          <span class="fx-none">(none)</span><i class="tri tri-d"></i>
          <div class="post"><span>Post</span><i class="tri tri-d"></i></div>
        </div>
        <div class="fx-out">
          <svg width="28" height="30" viewBox="0 0 28 30"><path fill="none" stroke="#50585f" stroke-width="3" d="M16 2h-3a13 13 0 0 0 0 26h3"/><path fill="#50585f" d="M10 10h8V5l9 10-9 10v-5h-8z"/></svg>
          <div class="fx-sel fx-sel-dark"><span>(none)</span><i class="tri tri-d"></i></div>
        </div>
      </div>
    </div>
  </section>

  <svg class="overlay" width="1702" height="786" viewBox="0 0 1702 786" aria-hidden="true">
    <path fill="none" stroke="#a4fb00" stroke-width="4" d="M1265 120v21"/>
    <path fill="none" stroke="#a4fb00" stroke-width="4" d="M1245 72h38v46h-38z"/>
    <g fill="none" stroke="#f13c09" stroke-width="4">
      <path d="M335 299h52v36h-52z"/>
      <path d="M362 337v130h507"/>
      <path d="M871 450h58v32h-58z"/>
      <path d="M931 466h246"/>
      <path d="M1179 185h62v568h-62z"/>
    </g>
    <use href="#cursor" x="264" y="418" width="20" height="28"/>
    <use href="#cursor" x="1516" y="249" width="20" height="28"/>
    <use href="#cursor" x="1368" y="490" width="20" height="28"/>
  </svg>
  <span class="ann ann-set">Set Mixer track</span>
  <span class="ann ann-ch">Channel<br>Settings</span>
  <span class="ann ann-mx">Mixer</span>
  <span class="ann ann-open">Open FX</span>
  <span class="ann ann-sel">Select FX</span>
</div>
</body>
</html>
```
FILE: styles.css
```
*{box-sizing:border-box}
html,body{margin:0;padding:0;background:#3c4a57}
body{font-family:"Open Sans","Liberation Sans",sans-serif;font-stretch:75%;color:#fff;overflow:hidden}
.defs{position:absolute}
button{font:inherit;color:inherit;padding:0;margin:0;border:0;background:none}
ul{list-style:none;margin:0;padding:0}
h2{margin:0;font:inherit}
i{display:block;font-style:normal}
svg{display:block;flex:none}

.app{position:relative;width:1702px;height:786px;overflow:hidden;background-color:#3c4a57;background-image:linear-gradient(90deg,#465461 1px,transparent 1px);background-size:50px 100%}

/* arrows */
.tri{width:7px;height:12px;background:#c6cdd2;clip-path:polygon(0 0,100% 50%,0 100%);flex:none}
.tri-d{background:#8f979d;width:6px;height:11px}
.tri-w{background:#e8ecef;width:9px;height:15px}
.tri-s{background:#c6cdd2;width:6px;height:11px}
.tri-l{background:#e8ecef;width:8px;height:15px;clip-path:polygon(100% 0,0 50%,100% 100%)}
.tri-w2{background:#e8ecef;width:8px;height:15px}

/* toolbar */
.toolbar{display:flex;height:124px;background:#7b838a;border-top:3px solid #666e75;border-bottom:2px solid #5f676e}
.panel{position:relative;display:flex;flex:none}
.panel::before{content:"";position:absolute;left:3px;top:18px;bottom:18px;width:5px;background:#626a71;clip-path:polygon(0 8%,100% 0,100% 100%,0 92%)}
.p-main{width:543px;padding:6px 0 0 15px}
.main-left{width:449px;display:flex;flex-direction:column;gap:5px}
.win-row{display:flex;height:28px;gap:1px}
.wbtn{width:29px;height:28px;border:1px solid #3c4349;border-radius:3px;background:linear-gradient(#5a6168,#474e54);display:flex;align-items:center;justify-content:center}
.title-box{flex:1;margin-left:3px;background:#4d555c;border:1px solid #3f464c}
.menu{height:30px;background:#6e8587;border:1px solid #566b6e;display:flex;align-items:center;padding-left:7px;gap:14.500px;font-size:23px;font-weight:300;line-height:1}
.hint{height:42px;background:#4d555c;border:1px solid #414a50;display:flex;align-items:center;padding:0 5px 0 3px}
.hint-t{font:15.500px "DejaVu Sans",sans-serif;letter-spacing:.3px;color:#f2f5f7}
.hint-k{margin-left:auto;margin-right:4px;font:15px "DejaVu Sans",sans-serif;color:#9aa2a8}
.masters{display:flex;gap:24px;margin-left:26px}
.mslider{position:relative;width:7px;height:100px;background:#70787f;border:1px solid #626a71}
.mfill{position:absolute;left:0;right:0;top:26px;bottom:0;background:#e4ecf1}
.mknob{position:absolute;left:-7px;width:19px;height:19px;border-radius:50%;background:radial-gradient(circle at 50% 30%,#6f777e,#2d3338 70%);box-shadow:0 2px 2px rgba(0,0,0,.35)}
.mknob::after{content:"";position:absolute;left:3px;right:3px;top:8px;height:2px;background:#e8ecef}
.k1{top:11px}.k2{top:40px}

.p-trans{width:300px;border-left:2px solid #606870;padding:6px 0 0 10px;flex-direction:column}
.tr-row{display:flex;gap:2px}
.tb{height:34px;background:linear-gradient(#555c63,#474e54);border:1px solid #3a4147;border-radius:3px;display:flex;align-items:center;justify-content:center}
.tb-w{width:54px}
.tb-led{margin:0 0 0 4px;background:linear-gradient(#ffb691,#ff9b78);border-color:#d96d3d;font-family:"Open Sans",sans-serif;font-style:italic;font-weight:600;font-size:27px;line-height:1;color:#d8300f;letter-spacing:1px}
.play-row{display:flex;align-items:center;height:44px;margin-top:5px}
.loop{width:60px;height:39px;border-radius:20px 0 0 20px;background:radial-gradient(circle at 40% 50%,#fff0c4,#ffb45e 65%,#f2852d);border:1px solid #c86e2a;display:flex;align-items:center;padding-left:12px;flex:none;margin-right:-16px}
.pill{display:flex;width:98px;height:44px;border-radius:22px;overflow:hidden;position:relative;flex:none}
.pill-l,.pill-r{display:flex;align-items:center;justify-content:center;background:linear-gradient(#474e55,#2f363c)}
.pill-l{width:48px;border-right:1px solid #22272c;padding-left:6px}
.pill-r{width:50px;padding-right:6px}
.pause{width:12px;height:13px;border-left:4px solid #f7a33d;border-right:4px solid #f7a33d}
.stop{width:11px;height:11px;background:#d7dfe6}
.record{width:40px;height:40px;border-radius:50%;background:radial-gradient(circle,#5f676e,#41484e);border:1px solid #3a4147;margin-left:3px;display:flex;align-items:center;justify-content:center;flex:none}
.record span{width:14px;height:14px;border-radius:50%;background:#fff}
.tempo{position:relative;margin-left:14px;width:82px;height:36px;border-radius:7px;background:linear-gradient(#cfdfe8,#f3f8fb);color:#1f2933;display:flex;align-items:baseline;padding-left:6px;line-height:36px;font-weight:300}
.tempo-a{font-size:28px}
.tempo-b{font-size:19px}
.spin{position:absolute;right:3px;top:50%;margin-top:-8px;height:16px;width:7px;display:flex;flex-direction:column;justify-content:space-between}
.spin i,.spin b{display:block;width:7px;height:6px;background:#a8b3ba;clip-path:polygon(50% 0,100% 100%,0 100%)}
.spin b{clip-path:polygon(0 0,100% 0,50% 100%)}
.pitch{position:relative;height:24px;margin:6px 0 0 8px;width:270px}
.pitch-line{position:absolute;left:0;right:0;top:9px;height:3px;background:#5d656c;border:1px solid #535b62}
.pitch-knob{position:absolute;left:62px;top:0;width:20px;height:20px;border-radius:50%;background:radial-gradient(circle at 50% 30%,#757d84,#2f353a 75%)}
.pitch-knob::after{content:"";position:absolute;left:9px;top:3px;width:1px;height:13px;background:#f2b04a}
.pitch-ticks{position:absolute;left:1px;right:1px;top:14px;display:flex;justify-content:space-between}
.pitch-ticks i{width:1px;height:10px;background:#5c646b}
.pitch-ticks i:nth-child(3),.pitch-ticks i:nth-child(4){height:4px;margin-top:6px}

.p-time{width:212px;border-left:2px solid #606870;flex-direction:column}
.time-cell{height:60px;border-bottom:2px solid #606870;padding:6px 0 0 10px}
.time{position:relative;width:192px;height:50px;background:#5e7275;border:1px solid #4f6265;display:flex;align-items:flex-end;justify-content:flex-end;padding-right:19px;font-weight:300;line-height:1;color:#f2f7f7}
.t-big{font-size:52px;letter-spacing:2px;margin-bottom:-3px}
.t-col{font-size:30px;margin:0 3px 3px 3px}
.t-sm{font-size:32px;margin-bottom:0}
.t-lbl{position:absolute;right:5px;top:3px;font:bold 10px "DejaVu Sans",sans-serif;color:#c4cfd1;font-stretch:normal}
.pat-cell{display:flex;padding:10px 0 0 10px}
.pbtn{width:26px;height:40px;background:linear-gradient(#5b6269,#474e54);border:1px solid #3c4349;border-radius:3px;display:flex;align-items:center;justify-content:center;flex:none}
.pbtn-plus{width:25px;font:22px "DejaVu Sans",sans-serif;margin-left:1px}
.pat{position:relative;width:139px;margin-left:1px;height:40px;background:linear-gradient(#d6e4ec,#f2f7fa);color:#1f2933;font-size:28px;font-weight:300;display:flex;align-items:center;justify-content:flex-end;padding-right:12px;line-height:1}

.tool-right{display:flex;flex-direction:column;width:647px;border-left:2px solid #606870}
.rtop{display:flex;height:60px;border-bottom:2px solid #606870}
.rbot{display:flex;height:59px}
.p-scope{width:265px;padding:6px 0 0 10px;gap:5px}
.scope{width:128px;height:50px;background-image:linear-gradient(transparent 24px,#f4f7f9 24px,#f4f7f9 25px,transparent 25px);background-color:#4d555c;border:1px solid #434a50}
.scope2-w{width:115px;display:flex;flex-direction:column}
.scope2{height:34px;background:#4d555c;border:1px solid #434a50;display:flex;flex-direction:column;gap:1px}
.scope2 i{width:6px;height:15px;background:#f1f4f6}
.eye{margin:3px 0 0 auto}
.p-cpu{width:247px;border-left:2px solid #606870;padding:6px 0 0 11px}
.cpu{width:227px;height:50px;background:#2d3740;display:flex}
.cpu-l{width:130px;display:flex;flex-direction:column;padding:2px 0 2px 2px;gap:2px}
.cpu-lt{height:20px;background:#454d55;display:flex;justify-content:space-between;align-items:center;padding:0 3px 0 1px;font-size:21px;font-weight:300;line-height:1}
.cpu-lt i{width:1px;height:18px;background:#f1f4f6}
.cpu-lb{flex:1;background:#3f474f;border-bottom:1px solid #f1f4f6}
.cpu-r{flex:1;display:flex;flex-direction:column;font-weight:300;line-height:1}
.cpu-rt{height:22px;display:flex;justify-content:space-between;align-items:center;padding:0 4px 0 6px;font-size:19px;background:#36414a}
.cpu-rt i{width:5px;height:18px;background:#f1f4f6}
.cpu-rb{flex:1;display:flex;align-items:center;padding:0 3px 0 3px;font-size:23px}
.cpu-rb span{margin:0 4px 0 auto}
.p-act{border-left:2px solid #606870;padding:6px 0 0 10px;gap:2px}
.bb{width:42px;height:50px;background:radial-gradient(circle at 50% 45%,#6b737a,#4b5258);border:1px solid #3e454b;border-radius:4px;display:flex;align-items:center;justify-content:center;flex:none}
.p-tools{width:324px;padding:5px 0 0 10px;gap:2px}
.bb-on{background:radial-gradient(circle,#cdf3ff,#72d4fb);border-color:#72d4fb}
.p-news{flex:1;border-left:2px solid #606870;padding:5px 0 0 11px;gap:6px}
.bb-dl{width:44px;background:radial-gradient(circle,#747c83,#5b6369)}
.news{width:249px;height:48px;background:#5e7275;border:1px solid #4f6265;display:flex;align-items:center;justify-content:space-between;padding:0 4px;font-size:22.500px;font-weight:300;font-stretch:88%;white-space:nowrap}
.news em{font-style:normal;color:#abb7ba}

/* browser */
.browser{position:absolute;left:5px;top:125px;width:217px;height:661px;display:flex;flex-direction:column;box-shadow:-1px 0 0 #30383e;overflow:hidden}
.app::before{content:"";position:absolute;left:0;top:124px;bottom:0;width:4px;background:#6f777e}
.br-head{height:72px;background:linear-gradient(#616a71,#555e65);flex:none}
.br-r1{display:flex;align-items:center;height:34px;padding:6px 10px 0 12px;gap:6px}
.br-title{font:bold 13.500px "DejaVu Sans",sans-serif;color:#a7afb5;margin-left:-1px;white-space:nowrap;font-stretch:normal}
.br-r1 .tri:first-child{margin-right:8px}
.br-r2{display:flex;align-items:center;justify-content:space-between;height:36px;padding:4px 27px 0 27px}
.c-gold{color:#d9b24a}
.c-grey{color:#aab2b8}
.br-body{flex:1;display:flex;background:#26292f}
.br-side{width:18px;background:#3a454c;flex:none}
.br-list{flex:1;font-size:21px;font-weight:300;letter-spacing:1.500px;line-height:1;background:#262b31;margin-top:-1px}
.br-list li{height:35px;display:flex;align-items:center;padding-left:9px;position:relative}
.br-list li.tall{height:39px}
.br-list span{position:absolute;left:38px;white-space:nowrap}
.c-proj{color:#d39a7c}
.c-green{color:#95cf7d}
.c-blue{color:#74a4d6}
.c-purple{color:#ae709f}
.c-rose{color:#b86d88}
.c-rose2{color:#ab7090}
.c-rose3{color:#a8658b}
.c-fold{color:#7ea4c2}
.c-teal{color:#7cc4a6}

/* channel rack */
.rack{position:absolute;left:238px;top:133px;width:730px;height:280px;background:#4d565d;box-shadow:0 0 0 1px #3d454c}
.rack-head{height:43px;display:flex;align-items:center;padding-left:20px;background:linear-gradient(#555e65,#4a5259)}
.rack-folder{margin-left:108px}
.sel-all{margin-left:6px;width:124px;height:34px;background:linear-gradient(#353d44,#272e34);border:1px solid #23292e;border-radius:3px;display:flex;align-items:center;justify-content:space-between;padding:0 3px 0 5px;font-size:20px;color:#d8dde1;font-weight:400}
.vdots{margin-left:19px;width:3px;height:27px;background:repeating-linear-gradient(#8b8260 0 2px,transparent 2px 6px)}
.rack-spk{margin-left:18px}
.rack-title{margin-left:7px;width:204px;font-size:23px;font-weight:400;letter-spacing:1.300px;color:#eef2f4}
.swing{width:36px;font-size:16px;color:#d7dde1;margin-top:-2px}
.swing-ctl{position:relative;width:89px;height:36px;margin-left:4px}
.swing-knob{position:absolute;left:0;top:5px;width:26px;height:26px;border-radius:50%;background:radial-gradient(circle at 50% 25%,#6f777e,#2b3136 70%)}
.swing-knob::after{content:"";position:absolute;left:12px;top:4px;width:1px;height:17px;background:#ec5f2a}
.swing-line{position:absolute;left:13px;top:17px;width:76px;height:3px;background:#343b41}
.swing-line::after{content:"";position:absolute;left:0;right:0;top:3px;height:13px;background:linear-gradient(90deg,#3f474e 1px,transparent 1px 35px,#3f474e 35px 36px,transparent 36px 70px,#3f474e 70px 71px,transparent 71px)}
.rack-y{width:7px;height:16px;background:#f3d948;margin-left:24px}
.rack-body{margin-left:7px;height:237px;background:#727a82;padding:27px 0 0 12px}
.ch{height:45px;display:flex;align-items:center}
.led{display:block;width:16px;height:16px;border-radius:50%;background:radial-gradient(circle closest-side,#e4ff7a 0 30%,#9be026 62%,#5f8f18 70%,#2f3a30 74% 82%,#a0a8ad 86%);flex:none}
.knob{position:relative;display:block;margin-left:8px;width:20px;height:22px;border-radius:50%;background:radial-gradient(circle at 50% 35%,#656d74,#41484e 70%);box-shadow:0 2px 1px #52595f;flex:none}
.knob::after{content:"";position:absolute;left:9px;top:2px;width:2px;height:8px;background:#e8ecef}
.k-m{margin-left:5px}
.k-m::after{left:7px;top:10px;width:7px;height:2px}
.num{position:relative;margin-left:12px;width:48px;height:35px;background:#687077;border:1px solid #596168;border-radius:4px;font-size:27px;font-weight:300;line-height:33px;color:#d4dadf;text-align:right;padding-right:10px}
.chev{position:absolute;right:4px;top:5px;color:#a5adb3;opacity:.8}
.cname{margin-left:13px;width:124px;height:39px;background:linear-gradient(#747c83,#5f676e);border:1px solid #525a61;border-bottom:2px solid #454c52;border-radius:3px;font-size:18px;letter-spacing:.5px;color:#f0f3f5;font-weight:400;flex:none}
.cname-on{background:#654f4f;border-color:#3d3232}
.csel{display:block;margin-left:14px;width:10px;height:30px;background:#51595f;border:1px solid #40474d;border-radius:1px;flex:none}
.csel-on{margin-left:13px;width:12px;height:38px;background:#c8ef50;padding:3px 2px;border:0;border-radius:2px}
.csel-on i{height:100%;background:#fffbb0;border:1px solid #3d4247}
.steps{display:flex;gap:6px;margin-left:17px}
.steps i{position:relative;width:18px;height:30px;border-radius:4px;background:linear-gradient(#6b737a,#555c63 60%,#4b5258);border:1px solid #3a4147;border-bottom-width:2px}
.steps i::after{content:"";position:absolute;left:3px;right:3px;top:4px;height:4px;background:linear-gradient(#2e3338 0 2px,#8e959b 2px)}
.steps i.r{background:linear-gradient(#7d6666,#6a5556 60%,#5d4a4b);border-color:#3f3535}
.roll{position:relative;margin-left:12px;width:385px;height:45px;background:#46596a;border:1px solid #3b4b58;flex:none}
.nt{position:absolute;width:48px;height:6px;background:#b4ecb8}
.n1{left:1px;top:21px}.n2{left:97px;top:10px}.n3{left:193px;top:0}.n4{left:193px;top:21px}.n5{left:289px;top:37px}
.play{position:absolute;left:166px;top:0;bottom:0;width:20px;background:linear-gradient(90deg,rgba(226,170,90,0),rgba(226,170,90,.55));border-right:1px solid #ffd88c}

/* synth */
.synth{position:absolute;left:215px;top:400px;width:733px;height:386px;background:linear-gradient(#58626a,#4d575e);box-shadow:0 -1px 0 #3d454c}
.syn-title{height:38px;display:flex;align-items:center;padding:0 12px 0 17px;background:linear-gradient(#606971,#4f585f)}
.gear{margin-left:14px}
.syn-name{margin-left:10px;font-size:20px;font-weight:400;color:#dfe4e8}
.syn-nav{margin-left:auto;display:flex;gap:15px;margin-right:28px}
.syn-x{margin-left:16px}
.syn-top{margin-left:7px;width:719px;height:69px;background:#2b3339;position:relative;display:flex;justify-content:flex-end}
.trk{width:62px;margin-right:10px;padding-top:10px;display:flex;flex-direction:column;align-items:center}
.trk-box{position:relative;width:54px;height:32px;background:radial-gradient(circle at 20% 50%,#9a6a72,#8a4f58 60%);font-size:33px;font-weight:300;text-align:right;line-height:31px;padding-right:12px;color:#f6e4c8}
.chev-t{right:2px;top:4px;color:#5f3a40;opacity:1}
.trk-l{font-size:12px;font-weight:700;letter-spacing:1px;color:#c8ced3;margin-top:6px}
.syn-tabs{margin-left:7px;width:719px;height:66px;background:linear-gradient(#c2cad0,#eef1f3 30%,#eef1f3 70%,#bfc7cd);padding:8px 8px 0 9px}
.tabs{display:flex;height:50px;border:1px solid #2a3036;border-radius:4px;overflow:hidden;box-shadow:0 2px 2px rgba(0,0,0,.5)}
.tab{flex:1;background:linear-gradient(#fbfcfc 0,#f1f3f4 45%,#d2d6d9 46%,#f2f4f5 90%,#bfc4c8);border-left:1px solid #454c52;font-size:19px;font-weight:400;color:#3f484f}
.tab-on{background:linear-gradient(#45d8f4,#c8f6fd 45%,#8deefb 60%,#3fdff5 92%);color:#0f5a80;border-left:0;font-weight:600}
.syn-body{margin-left:7px;width:719px;height:213px;background:radial-gradient(ellipse at 60% 30%,#697680,#515e68 70%,#475560);padding:7px 0 0 19px;display:flex;align-items:flex-start;color:#eef1f3;overflow:hidden}
.fs{border:1px solid #8e989f;border-radius:6px;margin:0;padding:0;height:260px;flex:none}
.fs legend{font-size:20px;line-height:26px;padding:0 6px;color:#eef1f3}
.fs-wave{width:302px}
.fs-wave legend{margin-left:34px}
.fs-voice{width:144px;margin-left:42px;padding-top:5px}
.fs-voice legend{margin-left:12px;padding:0 3px}
.fs-mod{width:129px;margin-left:43px;padding-top:18px}
.fs-mod legend{margin-left:15px;padding:0 3px}
.wave-grid{display:flex}
.wg-l{width:190px;padding-top:44px}
.wg-r{width:84px;margin-top:-6px}
.lab{font-size:19px;line-height:24px;text-align:center;color:#eef1f3;white-space:nowrap}
.pulse{margin-left:25px;width:143px;height:41px;border-radius:5px;background:linear-gradient(#fff,#f3f5f6 70%,#d4d8db);box-shadow:0 3px 3px rgba(0,0,0,.4);display:flex;align-items:center;color:#222;font-size:14px;font-weight:600;padding-left:47px;letter-spacing:.5px}
.pulse i{margin-left:33px;width:15px;height:10px;background:#333a40;clip-path:polygon(0 0,100% 0,50% 100%)}
.lab-mod{width:134px;margin-top:56px}
.mini-k{margin:2px 0 0 25px}
.wg-r .mini-k{margin-left:0}
.trans-k{margin-top:2px}
.disp{margin:2px 0 0 13px;width:59px;height:29px;background:#1fc8f8;border:3px solid #2f363c;border-radius:5px;color:#0d2730;font:bold 13px/23px "DejaVu Sans",sans-serif;text-align:center}
.lab-noise{margin-top:6px}
.rad{display:flex;align-items:center;height:51px;padding-left:31px;gap:10px;font-size:20px;color:#eef1f3}
.fs-mod .rad{height:62px;padding-left:17px;gap:8px}
.radio{width:34px;height:34px;border-radius:50%;background:radial-gradient(circle,#3a1f1c 0 3px,#7d5b55 4px,#8f979d 6px 7px,#2c3338 8px 11px,#64707a 12px 13px,#353d44 14px 16px,#6d7983 17px);flex:none}
.radio-on{background:radial-gradient(circle,#ff9a2e 0 4px,#d9701c 5px,#8f979d 6px 7px,#2c3338 8px 11px,#64707a 12px 13px,#353d44 14px 16px,#6d7983 17px)}
.lab-slide{margin-top:8px;text-align:left;padding-left:36px}
.lab-amount{margin-top:23px;padding-left:17px}

/* mixer */
.mixer{position:absolute;left:958px;top:141px;width:738px;height:625px;border:4px solid #a4fb00;background:#4d555c;display:flex;flex-direction:column}
.mx-head{height:38px;display:flex;align-items:center;padding-left:20px;flex:none;background:radial-gradient(#535b62 1px,transparent 1px) 0 0/3px 3px,#4b5359}
.mx-i1{margin-left:13px}
.mx-i2{margin-left:11px}
.mx-i3{margin-left:10px}
.mx-i4{margin-left:12px}
.mx-wide{margin-left:13px;font:15.500px "DejaVu Sans",sans-serif;color:#e6ebee;width:221px;font-stretch:normal}
.mx-name{font:15.500px "DejaVu Sans",sans-serif;color:#e6ebee;width:252px;font-stretch:normal}
.mx-max{margin-left:16px}
.mx-x{margin-left:15px}
.mx-min{margin-top:-6px}
.mx-body{height:573px;display:flex;padding-left:6px;flex:none}
.cstrip{width:66px;background:#4a5259;flex:none;border:0}
.tk-head{height:24px;background:#717a82;color:#3e464c;text-align:center;font-size:21px;font-weight:400;line-height:24px}
.tk-head-on{background:repeating-linear-gradient(135deg,#6b747c 0 2px,#7b838b 2px 4px);color:#fff;font-weight:400}
.c-main{display:flex}
.c-side{width:35px;display:flex;flex-direction:column;align-items:center;padding-left:2px}
.tk-send-i{margin-top:354px;color:#6b747b}
.c-side .dot{margin-top:44px}
.bigmeter{position:relative;width:26px;height:438px;margin-top:8px;background:#454d54;border:1px solid #2d3338;border-radius:2px;display:flex;flex-direction:column;color:#71797f}
.bm{font-size:17px;font-weight:300;text-align:center;line-height:1;border-bottom:1px solid #5c646b;display:flex;align-items:flex-end;justify-content:center;padding-bottom:1px;margin:0 2px}
.bm33{height:33px}.bm34{height:34px}.bm31{height:31px}.bm30{height:30px}.bm27{height:27px}.bm23{height:23px;font-size:15px}.bm22{height:22px;font-size:14px}.bm18{height:18px;font-size:9px}
.bm-bars{margin-top:auto;display:flex;gap:2px;align-items:flex-end;height:56px;padding:0 0 0 1px}
.bm-a,.bm-b{width:11px;background:#b2f74e}
.bm-a{height:52px}.bm-b{height:56px}
.mark{position:absolute;height:2px;background:#d9e05a}
.bm-m1{left:1px;width:11px;top:267px;background:#9ed644}
.bm-m2{left:14px;width:10px;top:265px;background:#9ed644}
.mx-bar{width:8px;margin-left:1px;background:#353c42;flex:none}
.tracks{position:relative;width:294px;margin-left:1px;overflow:hidden;flex:none;background:#4b535a}
.tracks-row{display:flex;height:552px}
.track{width:66px;flex:none;display:flex;flex-direction:column}
.tk-strip{height:213px;margin:0 1px;background:linear-gradient(#4a5259,#3a4148);border-radius:0 0 14px 14px;display:flex;flex-direction:column;align-items:center}
.tk-up{display:flex;width:100%;height:146px;padding:8px 0 0 2px}
.tk-lab{width:30px;height:138px;writing-mode:vertical-rl;transform:rotate(180deg);text-align:left;font-size:20px;font-weight:300;letter-spacing:1.500px;line-height:30px;color:#8b939a}
.meter{position:relative;margin-left:5px;width:20px;height:138px;background:linear-gradient(#5a636a,#5a636a) center 21px/10px 1px no-repeat,linear-gradient(#5a636a,#5a636a) center 42px/10px 1px no-repeat,#3f474e;border:1px solid #2b3136;border-radius:2px}
.meter-on{margin:-3px 0 -3px 4px;width:22px;height:144px;background:linear-gradient(#768a70,#768a70) center 24px/10px 1px no-repeat,linear-gradient(#768a70,#768a70) center 45px/10px 1px no-repeat,#566a56;border:2px solid #b8fb52}
.bar{position:absolute;bottom:1px;width:8px;background:#b6f94f}
.b-a{left:1px;height:12px}.b-b{left:10px;height:13px}
.b-c{left:1px;height:16px;width:8px}.b-d{left:10px;height:17px;width:8px}
.m-a{left:1px;width:8px;top:90px}.m-b{left:10px;width:8px;top:89px}
.m-c{left:1px;width:8px;top:85px}.m-d{left:10px;width:8px;top:84px}
.tk-led{margin-top:17px}
.bigk{position:relative;display:block;margin-top:10px;width:44px;height:44px;border-radius:50%;background:#3b4249;border:1px solid #30363c;flex:none}
.bigk::after{content:"";position:absolute;left:4px;top:4px;width:34px;height:34px;border-radius:50%;background:radial-gradient(circle at 50% 25%,#687077,#3c4349 80%);box-shadow:0 1px 1px #2d3338}
.tk-low{display:flex;height:187px;margin-top:32px;padding:0 3px}
.tk-ctl{width:30px;display:flex;flex-direction:column;align-items:center;padding-top:3px}
.g-pan{margin-top:9px}
.smk{position:relative;display:block;margin-top:8px;width:28px;height:28px;border-radius:50%;background:#3b4249;border:1px solid #30363c;flex:none}
.smk::after{content:"";position:absolute;left:3px;top:3px;width:20px;height:20px;border-radius:50%;background:radial-gradient(circle at 50% 25%,#667076,#3c4349 80%)}
.g-send{margin-top:27px;color:#6b747b}
.g-send.on{color:#f2c535;--acc:#f6dd5a}
.g-clock{margin-top:11px;color:#d3dae0}
.dot{display:block;width:10px;height:10px;border-radius:50%;background:#d3dae0;margin-top:15px;flex:none}
.tk-fad{position:relative;width:30px;height:183px;display:flex;justify-content:center;padding-top:10px}
.tk-fad::before{content:"";position:absolute;left:1px;right:1px;top:45px;height:90px;border-top:1px solid #3c444a;border-bottom:1px solid #3c444a;background:linear-gradient(90deg,#454d54 0 9px,transparent 9px 19px,#454d54 19px 28px)}
.fline{position:relative;width:3px;height:173px;background:#2e343a}
.fline-on{background:linear-gradient(#2e343a 0 48px,#a8e557 48px)}
.fh{position:absolute;left:5px;top:26px;width:20px;height:38px;border-radius:3px;background:linear-gradient(#e6eaed 0,#c3c8cc 30%,#8f959a 31%,#6c7278 44%,#383e44 45%,#7f858a 50%,#565c62 62%,#c2c7cb 80%,#727980);box-shadow:0 2px 2px rgba(0,0,0,.4)}
.f-lo{top:99px}
.fh-on{background:linear-gradient(#cbf37c 0,#edfaa8 28%,#9bd53f 32%,#7db82f 44%,#346a0e 46%,#94c83e 52%,#4f8d15 62%,#a6e545 85%,#88c42f)}
.tk-bot{position:relative;height:40px;margin-top:37px;display:flex;align-items:center;justify-content:center;padding-bottom:1px}
.w-up{color:#d5dbe0}
.send-k{display:block;width:38px;height:38px;border-radius:50%;border:3px solid #b7f24a;background:radial-gradient(circle at 50% 25%,#667076,#33393f 80%)}
.bot-up{position:absolute;left:27px;top:-8px;width:12px;height:7px;background:#c5f04c;clip-path:polygon(50% 0,100% 100%,0 100%)}
.tk-scroll{display:flex;align-items:center;height:14px;padding:0 10px 0 9px;margin-top:0}
.thumb{width:33px;height:5px;background:#2a3036;border-radius:3px;margin-left:7px}
.sc-r{margin-left:auto}
.curve{position:absolute;left:0;top:0;pointer-events:none}
.mx-bar2{margin-left:0;width:9px}
.fxp{margin-left:9px;width:331px;background:#6e767d;display:flex;flex-direction:column;flex:none;border:1px solid #575f66;height:573px}
.fx-top{height:47px;display:flex;align-items:center;padding:0 7px 0 5px;gap:6px;border-bottom:1px solid #565e65}
.fx-sel{flex:1;height:33px;border-radius:3px;display:flex;align-items:center;justify-content:space-between;padding:0 4px 0 5px;font:16px "DejaVu Sans",sans-serif;font-stretch:normal}
.fx-sel-dim{background:#5d666d;color:#8f979e;border:1px solid #575f66}
.fx-sel-dark{background:linear-gradient(#3c434a,#32393f);color:#d7dde2;border:1px solid #2d3338}
.slots{margin-top:1px;padding-left:0}
.slot{height:25px;margin:0 0 2px 0;display:flex;align-items:center;padding:0 8px 0 10px;background:#687178;border:1px solid #5d656c;border-bottom-color:#535b62;font-size:18px;font-style:italic;font-weight:300;color:#9ea6ac}
.slot-on{background:#586269;font-style:normal;font-weight:400;color:#f0f3f5}
.slot span:nth-child(2){margin-left:8px}
.slot .sk{display:block;margin-left:auto;width:24px;height:24px;border-radius:50%;background:radial-gradient(circle at 50% 30%,#5f676e,#3e454b 75%);border:2px solid #a5adb3;flex:none}
.slot .sk-on{border-color:#eef1f3}
.sl{width:15px;height:15px;margin-left:7px}
.eq-row{display:flex;height:159px;padding:15px 0 0 3px;border-bottom:1px solid #565e65}
.eq{position:relative;width:219px;height:129px;border:1px solid #4d555c;background:linear-gradient(90deg,transparent 20px,#666e75 20px,#666e75 22px,transparent 22px,transparent 108px,#666e75 108px,#666e75 110px,transparent 110px,transparent 179px,#666e75 179px,#666e75 181px,transparent 181px),#71797f}
.eq i{position:absolute;left:-1px;right:-1px;top:62px;height:4px;background:#dde2e6}
.eqf{position:relative;width:33px;height:131px;margin-left:-1px;display:flex;justify-content:center}
.eq+.eqf{margin-left:4px}
.eqf::before{content:"";width:3px;height:100%;background:#4a5259}
.eqf::after{content:"";position:absolute;left:0;right:0;top:32px;height:65px;border-top:1px solid #565e65;border-bottom:1px solid #565e65;z-index:0}
.eqh{position:absolute;z-index:1;left:7px;top:52px;width:19px;height:28px;border-radius:3px;background:linear-gradient(#e2e6e9 0,#b5bbc0 30%,#6f767c 32%,#30363c 50%,#757c82 60%,#c2c7cb 85%,#7a8187)}
.fx-row{height:47px;display:flex;align-items:center;padding:0 7px 0 6px;border-bottom:1px solid #565e65}
.fx-none{margin-left:12px;font:16px "DejaVu Sans",sans-serif;color:#e2e7eb;width:178px;font-stretch:normal}
.post{margin-left:auto;width:65px;height:35px;background:linear-gradient(#3c434a,#32393f);border:1px solid #2d3338;border-radius:3px;display:flex;align-items:center;justify-content:space-between;padding:0 4px 0 4px;font:16px "DejaVu Sans",sans-serif;color:#d7dde2;font-stretch:normal}
.fx-out{flex:1;display:flex;align-items:center;padding:0 7px 0 5px;gap:6px}

/* overlays */
.overlay{position:absolute;left:0;top:0;pointer-events:none}
.ann{position:absolute;font-family:"Lato","Inter",sans-serif;font-stretch:normal;font-weight:700;color:#fff;white-space:nowrap;line-height:1}
.ann-set{left:512px;top:432px;font-size:33px;letter-spacing:1.100px}
.ann-ch{left:208px;top:443px;font-size:34px;line-height:30px;letter-spacing:.8px}
.ann-mx{left:1211px;top:146px;font-size:32px;letter-spacing:1px}
.ann-open{left:1460px;top:273px;font-size:32px;letter-spacing:2px}
.ann-sel{left:1383px;top:514px;font-size:32px;letter-spacing:1.500px}
```
